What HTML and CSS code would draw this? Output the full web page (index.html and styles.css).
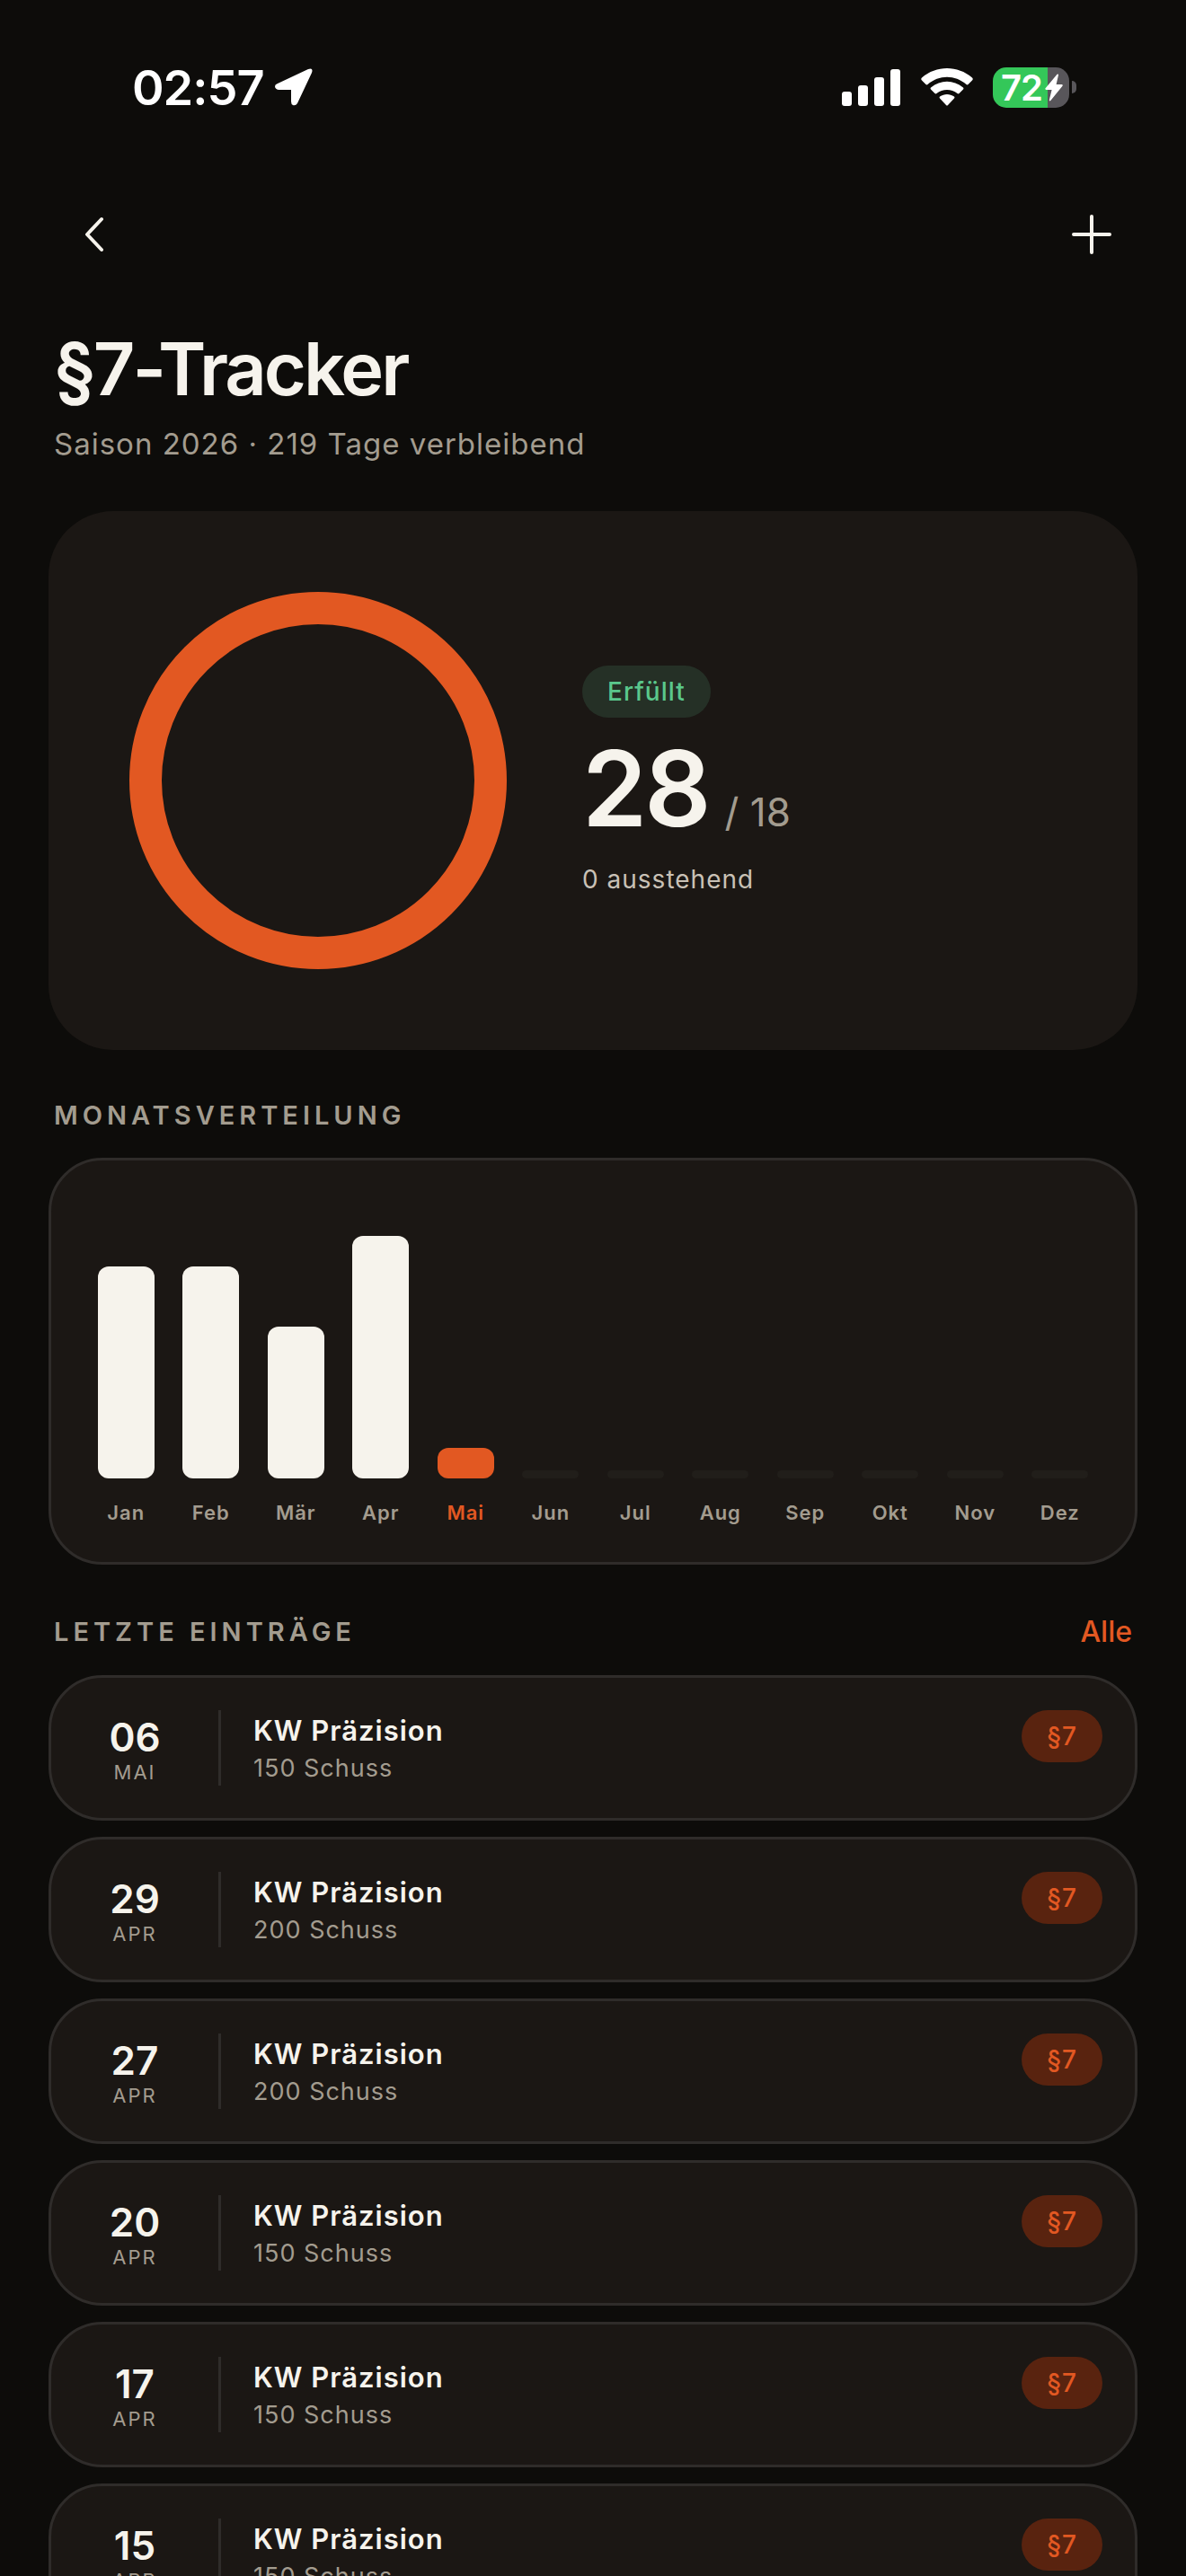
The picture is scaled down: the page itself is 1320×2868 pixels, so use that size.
FILE: index.html
```
<!DOCTYPE html>
<html lang="de">

<head>
    <meta charset="UTF-8">
    <meta name="viewport" content="width=device-width, initial-scale=1.0">
    <title>§7-Tracker</title>
    <link rel="stylesheet" href="styles.css">
</head>

<body>
    <div class="screen">
        <div class="status-bar">
            <div class="status-group status-left">
                <span class="time">02:57</span>
                <svg class="location" width="42" height="42" viewBox="0 0 42 42" fill="#fff">
                    <path d="M3 17 L37 1 Q43 -1 41 5 L25 39 Q23 42 20 41 Q18 40 18 37 V24 H4 Q0 23 0 20 Q0 18 3 17 Z" />
                </svg>
            </div>
            <div class="status-group status-right">
                <svg width="66" height="42" viewBox="0 0 66 42" fill="#fff">
                    <rect x="0" y="26" width="11" height="16" rx="3" />
                    <rect x="18" y="19" width="11" height="23" rx="3" />
                    <rect x="36" y="10" width="11" height="32" rx="3" />
                    <rect x="54" y="1" width="11" height="41" rx="3" />
                </svg>
                <svg width="58" height="42" viewBox="0 0 58 42" fill="#fff">
                    <path d="M1 13.500 Q-.5 12 1 10.500 C17 -3.500 41 -3.500 57 10.500 Q58.500 12 57 13.500 L52.500 18 Q51.500 18.800 50.500 18 C38 7 20 7 7.500 18 Q6.500 18.800 5.500 18 Z" />
                    <path d="M11 23.500 Q10 22.500 11 21.500 C22 12.500 36 12.500 47 21.500 Q48 22.500 47 23.500 L42.500 28 Q41.500 28.800 40.500 28 C34 22.500 24 22.500 17.500 28 Q16.500 28.800 15.500 28 Z" />
                    <path d="M21 33.500 Q20 32.500 21 31.600 C26 28 32 28 37 31.600 Q38 32.500 37 33.500 L30 41 Q29 42 28 41 Z" />
                </svg>
                <div class="battery">
                    <div class="battery-body">
                        <span class="battery-level">72</span>
                        <svg class="bolt" width="20" height="31" viewBox="0 0 20 31" fill="#fff">
                            <path d="M13.500 .8 Q15.200 -.3 15 1.600 L12.600 12 H18.600 Q20.500 12.300 19.300 14 L6.300 30 Q4.500 31.300 4.900 29 L7.600 18 H1.400 Q-.5 17.600 .8 16 Z" />
                        </svg>
                    </div>
                    <div class="battery-cap"></div>
                </div>
            </div>
        </div>

        <nav class="nav">
            <button type="button" class="icon-button" aria-label="Zurück">
                <svg width="24" height="42" viewBox="0 0 24 42">
                    <path d="M20 4 L4 21 L20 38" />
                </svg>
            </button>
            <button type="button" class="icon-button" aria-label="Eintrag hinzufügen">
                <svg width="44" height="44" viewBox="0 0 44 44">
                    <path d="M22 2 V42 M2 22 H42" />
                </svg>
            </button>
        </nav>

        <main class="content">
            <header class="page-head">
                <h1>§7-Tracker</h1>
                <p>Saison 2026 · 219 Tage verbleibend</p>
            </header>

            <section class="hero">
                <svg class="ring" width="420" height="420" viewBox="0 0 420 420">
                    <circle cx="210" cy="210" r="192" />
                </svg>
                <div class="hero-info">
                    <span class="pill pill-ok">Erfüllt</span>
                    <div class="count"><strong>28</strong><span>/ 18</span></div>
                    <p class="pending">0 ausstehend</p>
                </div>
            </section>

            <div class="section-head">
                <h2>Monatsverteilung</h2>
            </div>
            <section class="card chart">
                <div class="month"><div class="track"><div class="bar" style="height: 87.5%"></div></div><span>Jan</span></div>
                <div class="month"><div class="track"><div class="bar" style="height: 87.5%"></div></div><span>Feb</span></div>
                <div class="month"><div class="track"><div class="bar" style="height: 62.5%"></div></div><span>Mär</span></div>
                <div class="month"><div class="track"><div class="bar" style="height: 100%"></div></div><span>Apr</span></div>
                <div class="month current"><div class="track"><div class="bar" style="height: 12.5%"></div></div><span>Mai</span></div>
                <div class="month"><div class="track"><div class="bar empty"></div></div><span>Jun</span></div>
                <div class="month"><div class="track"><div class="bar empty"></div></div><span>Jul</span></div>
                <div class="month"><div class="track"><div class="bar empty"></div></div><span>Aug</span></div>
                <div class="month"><div class="track"><div class="bar empty"></div></div><span>Sep</span></div>
                <div class="month"><div class="track"><div class="bar empty"></div></div><span>Okt</span></div>
                <div class="month"><div class="track"><div class="bar empty"></div></div><span>Nov</span></div>
                <div class="month"><div class="track"><div class="bar empty"></div></div><span>Dez</span></div>
            </section>

            <div class="section-head">
                <h2>Letzte Einträge</h2>
                <a href="#alle">Alle</a>
            </div>
            <ul class="entries" id="alle">
                <li class="card entry">
                    <div class="date"><strong>06</strong><span>Mai</span></div>
                    <div class="entry-text"><h3>KW Präzision</h3><p>150 Schuss</p></div>
                    <span class="pill pill-law">§7</span>
                </li>
                <li class="card entry">
                    <div class="date"><strong>29</strong><span>Apr</span></div>
                    <div class="entry-text"><h3>KW Präzision</h3><p>200 Schuss</p></div>
                    <span class="pill pill-law">§7</span>
                </li>
                <li class="card entry">
                    <div class="date"><strong>27</strong><span>Apr</span></div>
                    <div class="entry-text"><h3>KW Präzision</h3><p>200 Schuss</p></div>
                    <span class="pill pill-law">§7</span>
                </li>
                <li class="card entry">
                    <div class="date"><strong>20</strong><span>Apr</span></div>
                    <div class="entry-text"><h3>KW Präzision</h3><p>150 Schuss</p></div>
                    <span class="pill pill-law">§7</span>
                </li>
                <li class="card entry">
                    <div class="date"><strong>17</strong><span>Apr</span></div>
                    <div class="entry-text"><h3>KW Präzision</h3><p>150 Schuss</p></div>
                    <span class="pill pill-law">§7</span>
                </li>
                <li class="card entry">
                    <div class="date"><strong>15</strong><span>Apr</span></div>
                    <div class="entry-text"><h3>KW Präzision</h3><p>150 Schuss</p></div>
                    <span class="pill pill-law">§7</span>
                </li>
            </ul>
        </main>
    </div>
</body>

</html>
```
FILE: styles.css
```
* {
    box-sizing: border-box;
    margin: 0;
    padding: 0;
}

body {
    font-family: Inter, "Liberation Sans", sans-serif;
    background-color: #0d0c0a;
    color: #f6f3ec;
}

.screen {
    display: flex;
    flex-direction: column;
    height: 100vh;
    overflow: hidden;
}

/* status bar */
.status-bar {
    display: flex;
    justify-content: space-between;
    align-items: center;
    flex-shrink: 0;
    height: 194px;
    padding: 0 122px 0 147px;
    color: #fff;
}

.status-group {
    display: flex;
    align-items: center;
}

.status-left {
    gap: 12px;
}

.status-right {
    gap: 22px;
}

.time {
    font-size: 54px;
    font-weight: 600;
    letter-spacing: -1px;
}

.battery {
    display: flex;
    align-items: center;
    gap: 3px;
}

.battery-body {
    display: flex;
    align-items: center;
    justify-content: space-between;
    width: 85px;
    height: 45px;
    padding: 0 7px 0 9px;
    border-radius: 15px;
    background: linear-gradient(to right, #34c759 72%, #58565a 72%);
}

.battery-level {
    font-size: 40px;
    font-weight: 600;
    letter-spacing: -1px;
}

.battery-cap {
    width: 5px;
    height: 14px;
    border-radius: 0 6px 6px 0;
    background-color: #58565a;
}

/* top buttons */
.nav {
    display: flex;
    justify-content: space-between;
    flex-shrink: 0;
    padding: 0 39px;
}

.icon-button {
    display: flex;
    align-items: center;
    justify-content: center;
    width: 132px;
    height: 134px;
    border: none;
    background: none;
    cursor: pointer;
}

.icon-button path {
    fill: none;
    stroke: #f6f3ec;
    stroke-width: 4;
    stroke-linecap: round;
    stroke-linejoin: round;
}

.content {
    flex: 1;
    min-height: 0;
    padding: 34px 54px 0;
    overflow: hidden;
}

.page-head {
    padding: 0 6px;
    margin-bottom: 55px;
}

.page-head h1 {
    font-size: 81px;
    font-weight: 600;
    line-height: 98px;
    letter-spacing: -3px;
}

.page-head p {
    margin-top: 14px;
    font-size: 33px;
    line-height: 40px;
    letter-spacing: 1px;
    color: #a39c8f;
}

/* progress card */
.hero {
    display: flex;
    align-items: center;
    gap: 84px;
    padding: 90px;
    border-radius: 72px;
    background-color: #1b1714;
}

.hero-info {
    display: flex;
    flex-direction: column;
    align-items: flex-start;
}

.ring {
    flex-shrink: 0;
}

.ring circle {
    fill: none;
    stroke: #e25822;
    stroke-width: 36;
}

.pill {
    padding: 0 28px;
    border-radius: 29px;
    font-size: 28px;
    font-weight: 500;
    line-height: 58px;
    letter-spacing: 1px;
}

.pill-ok {
    background-color: #253026;
    color: #5ac88c;
}

.pill-law {
    background-color: #59230f;
    color: #e25822;
}

.count {
    display: flex;
    align-items: baseline;
    gap: 18px;
    height: 118px;
    margin: 20px 0 24px;
    line-height: 118px;
}

.count strong {
    font-size: 116px;
    font-weight: 600;
    letter-spacing: -3px;
}

.count span {
    font-size: 44px;
    color: #a39c8f;
}

.pending {
    font-size: 28px;
    line-height: 36px;
    letter-spacing: 1px;
    color: #c9c1b6;
}

.section-head {
    display: flex;
    justify-content: space-between;
    align-items: center;
    padding: 0 6px;
    margin: 54px 0 28px;
}

.section-head h2 {
    font-size: 29px;
    font-weight: 600;
    line-height: 38px;
    letter-spacing: 5px;
    text-transform: uppercase;
    color: #a39c8f;
}

.section-head a {
    font-size: 32px;
    font-weight: 500;
    line-height: 41px;
    color: #e25822;
    text-decoration: none;
}

.card {
    border: 3px solid #2f2c2a;
    border-radius: 60px;
    background-color: #1b1714;
}

/* months */
.chart {
    display: grid;
    grid-template-columns: repeat(12, 1fr);
    padding: 84px 36px 41px;
}

.month {
    display: flex;
    flex-direction: column;
    align-items: center;
    gap: 24px;
    font-size: 22px;
    font-weight: 600;
    line-height: 28px;
    letter-spacing: 1px;
    color: #a39c8f;
}

.month.current {
    color: #e25822;
}

.track {
    display: flex;
    align-items: flex-end;
    width: 67%;
    height: 270px;
}

.bar {
    width: 100%;
    border-radius: 12px;
    background-color: #f6f3ec;
}

.current .bar {
    background-color: #e25822;
}

.bar.empty {
    height: 9px;
    border-radius: 5px;
    background-color: #211e1a;
}

/* entries */
.entries {
    display: flex;
    flex-direction: column;
    gap: 18px;
    list-style: none;
}

.entry {
    display: flex;
    align-items: flex-start;
    padding: 36px;
}

.date {
    display: flex;
    flex-direction: column;
    align-items: center;
    justify-content: flex-end;
    width: 114px;
    height: 84px;
    margin-right: 36px;
}

.date strong {
    font-size: 44px;
    font-weight: 600;
    line-height: 48px;
}

.date span {
    font-size: 22px;
    line-height: 30px;
    letter-spacing: 2px;
    text-transform: uppercase;
    color: #a39c8f;
}

.entry-text {
    flex: 1;
    padding-left: 36px;
    border-left: 3px solid #2f2c2a;
}

.entry-text h3 {
    font-size: 31px;
    font-weight: 600;
    line-height: 46px;
    letter-spacing: 1px;
}

.entry-text p {
    font-size: 27px;
    line-height: 38px;
    letter-spacing: 1px;
    color: #a39c8f;
}
```
